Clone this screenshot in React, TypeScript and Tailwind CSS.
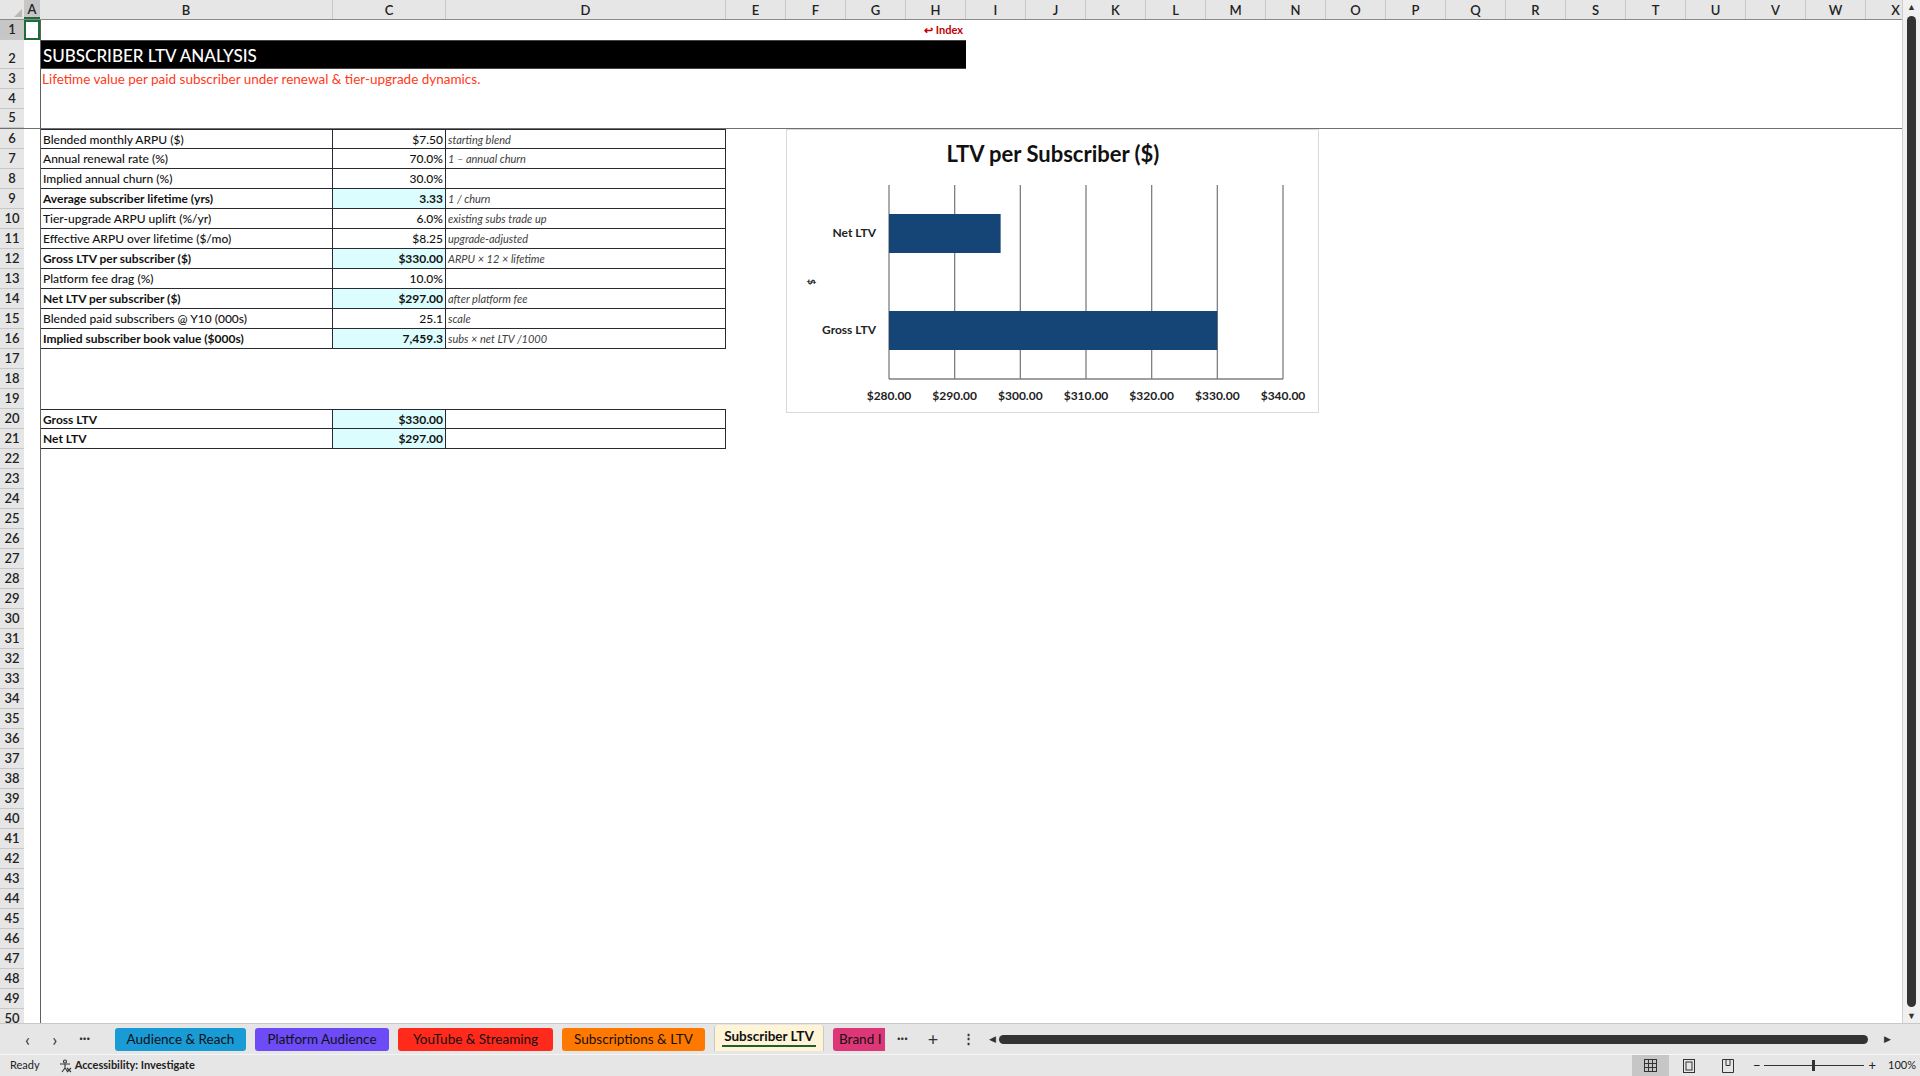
import React from "react";

const COLS_EF = ["E","F","G","H","I","J","K","L","M","N","O","P","Q","R","S","T","U","V","W","X"];

type R = { b: string; c: string; d?: string; bold?: boolean; hl?: boolean };
const data: R[] = [
  { b: "Blended monthly ARPU ($)", c: "$7.50", d: "starting blend" },
  { b: "Annual renewal rate (%)", c: "70.0%", d: "1 – annual churn" },
  { b: "Implied annual churn (%)", c: "30.0%" },
  { b: "Average subscriber lifetime (yrs)", c: "3.33", d: "1 / churn", bold: true, hl: true },
  { b: "Tier-upgrade ARPU uplift (%/yr)", c: "6.0%", d: "existing subs trade up" },
  { b: "Effective ARPU over lifetime ($/mo)", c: "$8.25", d: "upgrade-adjusted" },
  { b: "Gross LTV per subscriber ($)", c: "$330.00", d: "ARPU × 12 × lifetime", bold: true, hl: true },
  { b: "Platform fee drag (%)", c: "10.0%" },
  { b: "Net LTV per subscriber ($)", c: "$297.00", d: "after platform fee", bold: true, hl: true },
  { b: "Blended paid subscribers @ Y10 (000s)", c: "25.1", d: "scale" },
  { b: "Implied subscriber book value ($000s)", c: "7,459.3", d: "subs × net LTV /1000", bold: true, hl: true },
];
const data2: R[] = [
  { b: "Gross LTV", c: "$330.00", bold: true, hl: true },
  { b: "Net LTV", c: "$297.00", bold: true, hl: true },
];

function RowHead({ n, h, sel }: { n: number; h: number; sel?: boolean }) {
  return (
    <div
      className={`w-[24px] shrink-0 flex items-end justify-center pb-[0px] text-[13px] font-semibold text-[#222] border-b border-[#c8c8c8] ${sel ? "bg-[#c6c6c6]" : "bg-[#e6e6e6]"}`}
      style={{ height: h }}
    >
      {n}
    </div>
  );
}

function TableRow({ r, first }: { r: R; first: boolean }) {
  const bt = first ? "border-t" : "";
  return (
    <div className="flex h-[20px] text-[#111]">
      <div className={`w-[293px] border-l border-r border-b ${bt} border-[#2a2a35] px-[2px] text-[12px] leading-[19px] truncate ${r.bold ? "font-bold" : "font-medium"}`}>{r.b}</div>
      <div className={`w-[113px] border-r border-b ${bt} border-[#2a2a35] px-[2px] text-right text-[12px] leading-[19px] ${r.bold ? "font-bold" : "font-medium"} ${r.hl ? "bg-[#dcfdfd]" : ""}`}>{r.c}</div>
      <div className={`w-[280px] border-r border-b ${bt} border-[#2a2a35] px-[2px] text-[11px] italic leading-[19px] text-[#404040]`}>{r.d ?? ""}</div>
    </div>
  );
}

function Chart() {
  const x0 = 102, x1 = 496;
  const xs = (v: number) => x0 + ((v - 280) / 60) * (x1 - x0);
  const ticks = [280, 290, 300, 310, 320, 330, 340];
  return (
    <div className="absolute left-[786px] top-[129px] w-[533px] h-[284px] bg-white border border-[#d9d9d9]">
      <svg width="533" height="284" style={{ fontFamily: "Lato, 'Open Sans', sans-serif" }}>
        <text x="266" y="32" textAnchor="middle" fontSize="22" fontWeight="700" fill="#111">LTV per Subscriber ($)</text>
        {ticks.map((t) => (
          <line key={t} x1={xs(t)} x2={xs(t)} y1="55" y2="249" stroke="#7f7f7f" strokeWidth="1.3" />
        ))}
        <line x1={x0} x2={x1} y1="249" y2="249" stroke="#7f7f7f" strokeWidth="1.3" />
        <rect x={x0} y="84" width={xs(297) - x0} height="39" fill="#154576" />
        <rect x={x0} y="181" width={xs(330) - x0} height="39" fill="#154576" />
        <text x="89" y="107" textAnchor="end" fontSize="12" fontWeight="700" fill="#222">Net LTV</text>
        <text x="89" y="204" textAnchor="end" fontSize="12" fontWeight="700" fill="#222">Gross LTV</text>
        <text x="0" y="0" fontSize="10" fontWeight="700" fill="#222" transform="translate(21 152) rotate(90)" textAnchor="middle">$</text>
        {ticks.map((t) => (
          <text key={t} x={xs(t)} y="270" textAnchor="middle" fontSize="12" fontWeight="700" fill="#222">${t}.00</text>
        ))}
      </svg>
    </div>
  );
}

const tabs = [
  { t: "Audience & Reach", c: "bg-[#199bd6]", w: "w-[131px]" },
  { t: "Platform Audience", c: "bg-[#6d4cf7]", w: "w-[134px]" },
  { t: "YouTube & Streaming", c: "bg-[#ff2a1c]", w: "w-[155px]" },
  { t: "Subscriptions & LTV", c: "bg-[#ff7800]", w: "w-[143px]" },
];

export default function App() {
  const rowsAfter = Array.from({ length: 50 - 5 }, (_, i) => i + 6);
  return (
    <div className="w-[1920px] h-[1076px] bg-white flex flex-col overflow-hidden text-[#111]" style={{ fontFamily: "Lato, 'Open Sans', sans-serif" }}>
      <div className="flex h-[1023px]">
        <div className="relative w-[1902px] overflow-hidden">
          <div className="flex h-[20px] bg-[#e6e6e6] border-b border-[#8a8a8a] text-[13px] font-semibold text-[#222]">
            <div className="w-[24px] shrink-0 relative">
              <div className="absolute right-[2px] bottom-[2px] w-0 h-0 border-l-[8px] border-l-transparent border-b-[8px] border-b-[#b8b8b8]" />
            </div>
            <div className="w-[16px] shrink-0 bg-[#c6c6c6] text-center border-b-2 border-[#1e6b3c] leading-[18px]">A</div>
            <div className="w-[293px] shrink-0 text-center leading-[20px] border-r border-[#c8c8c8]">B</div>
            <div className="w-[113px] shrink-0 text-center leading-[20px] border-r border-[#c8c8c8]">C</div>
            <div className="w-[280px] shrink-0 text-center leading-[20px] border-r border-[#c8c8c8]">D</div>
            {COLS_EF.map((c) => (
              <div key={c} className="w-[60px] shrink-0 text-center leading-[20px] border-r border-[#c8c8c8]">{c}</div>
            ))}
          </div>
          <div className="flex">
            <RowHead n={1} h={20} sel />
            <div className="w-[16px] h-[20px] border-2 border-[#1e6b3c] box-border" />
            <div className="w-[927px] h-[20px] text-right text-[11px] font-bold text-[#c00000] leading-[20px] pr-[4px]">↩ Index</div>
          </div>
          <div className="flex">
            <RowHead n={2} h={29} />
            <div className="w-[16px]" />
            <div className="w-[926px] h-[29px] bg-black text-white text-[17px] font-medium leading-[29px] px-[3px] border-y border-[#444]">SUBSCRIBER LTV ANALYSIS</div>
          </div>
          <div className="flex">
            <RowHead n={3} h={20} />
            <div className="w-[16px]" />
            <div className="text-[13.5px] text-[#ff3a1a] leading-[20px] px-[2px]">Lifetime value per paid subscriber under renewal &amp; tier-upgrade dynamics.</div>
          </div>
          <div className="flex"><RowHead n={4} h={20} /></div>
          <div className="flex border-b border-[#707070]"><RowHead n={5} h={19} /></div>
          {rowsAfter.map((n) => {
            let content: React.ReactNode = null;
            if (n >= 6 && n <= 16) content = <TableRow r={data[n - 6]} first={n === 6} />;
            if (n >= 20 && n <= 21) content = <TableRow r={data2[n - 20]} first={n === 20} />;
            return (
              <div key={n} className="flex h-[20px]">
                <RowHead n={n} h={20} />
                <div className="w-[16px] shrink-0" />
                {content}
              </div>
            );
          })}
          <div className="absolute left-[40px] top-[20px] w-[1px] h-[1010px] bg-[#606060]" />
          <Chart />
        </div>
        <div className="w-[18px] bg-[#f0f0f0] border-l border-[#d0d0d0] flex flex-col items-center">
          <div className="text-[9px] text-[#333] h-[14px] leading-[14px]">▲</div>
          <div className="w-[9px] flex-1 bg-[#333] rounded-full my-[2px]" />
          <div className="text-[9px] text-[#333] h-[14px] leading-[14px]">▼</div>
        </div>
      </div>
      <div className="h-[31px] bg-[#e6e6e6] border-t border-[#c8c8c8] flex items-center text-[13px] text-[#111]">
        <div className="w-[115px] flex items-center justify-around px-[14px] text-[#333]">
          <span className="text-[18px] leading-none">‹</span>
          <span className="text-[18px] leading-none">›</span>
          <span className="font-bold">···</span>
        </div>
        <div className="flex items-center gap-[9px] h-[23px]">
          {tabs.map((t) => (
            <div key={t.t} className={`${t.c} ${t.w} h-[23px] rounded-[3px] flex items-center justify-center text-[13.5px]`}>{t.t}</div>
          ))}
          <div className="w-[110px] h-[26px] -mt-[3px] bg-[#fff5d6] rounded-t-[3px] flex flex-col items-center justify-center border-x border-[#c8c8c8]">
            <span className="font-bold text-[13.5px] leading-[16px]">Subscriber LTV</span>
            <span className="w-[94px] h-[2px] bg-[#1e5e33] mt-[1px]" />
          </div>
          <div className="w-[52px] h-[23px] bg-[#de3778] rounded-l-[3px] overflow-hidden pl-[6px] leading-[23px] whitespace-nowrap text-[13.5px]">Brand I</div>
        </div>
        <span className="ml-[12px] font-bold text-[#333]">···</span>
        <span className="ml-[20px] text-[18px] text-[#333]">+</span>
        <span className="ml-[24px] text-[#333] font-bold">⋮</span>
        <span className="ml-[14px] text-[9px] text-[#333]">◀</span>
        <div className="ml-[3px] w-[869px] h-[9px] bg-[#333] rounded-full" />
        <span className="ml-[16px] text-[9px] text-[#333]">▶</span>
      </div>
      <div className="h-[22px] bg-[#e6e6e6] border-t border-[#f6f6f6] flex items-center text-[11px] text-[#222]">
        <span className="ml-[10px]">Ready</span>
        <span className="ml-[18px] flex items-center gap-[3px]">
          <svg width="14" height="14" viewBox="0 0 14 14" fill="none" stroke="#333" strokeWidth="1.1">
            <circle cx="7" cy="2.5" r="1.5" />
            <path d="M2 5h10M7 5v4M7 9l-3 4M7 9l3 4" />
            <path d="M9 9l4 4M13 9l-4 4" />
          </svg>
          <span className="font-bold">Accessibility: Investigate</span>
        </span>
        <div className="flex-1" />
        <div className="w-[37px] h-[22px] bg-[#c6c6c6] flex items-center justify-center">
          <svg width="13" height="13" viewBox="0 0 13 13" fill="none" stroke="#333"><rect x="0.5" y="0.5" width="12" height="12" /><path d="M4.5 0.5v12M8.5 0.5v12M0.5 4.5h12M0.5 8.5h12" /></svg>
        </div>
        <div className="w-[40px] flex justify-center">
          <svg width="12" height="14" viewBox="0 0 12 14" fill="none" stroke="#333"><rect x="0.5" y="0.5" width="11" height="13" /><rect x="3" y="3" width="6" height="8" /></svg>
        </div>
        <div className="w-[38px] flex justify-center">
          <svg width="12" height="14" viewBox="0 0 12 14" fill="none" stroke="#333"><path d="M0.5 0.5h11v13h-11z M4 0.5v6h4v-6" /></svg>
        </div>
        <span className="ml-[6px] text-[13px]">−</span>
        <div className="relative w-[100px] h-[1px] bg-[#333] mx-[4px]">
          <div className="absolute left-[48px] -top-[5px] w-[3px] h-[11px] bg-[#333]" />
        </div>
        <span className="text-[13px]">+</span>
        <span className="ml-[12px] mr-[4px]">100%</span>
      </div>
    </div>
  );
}
